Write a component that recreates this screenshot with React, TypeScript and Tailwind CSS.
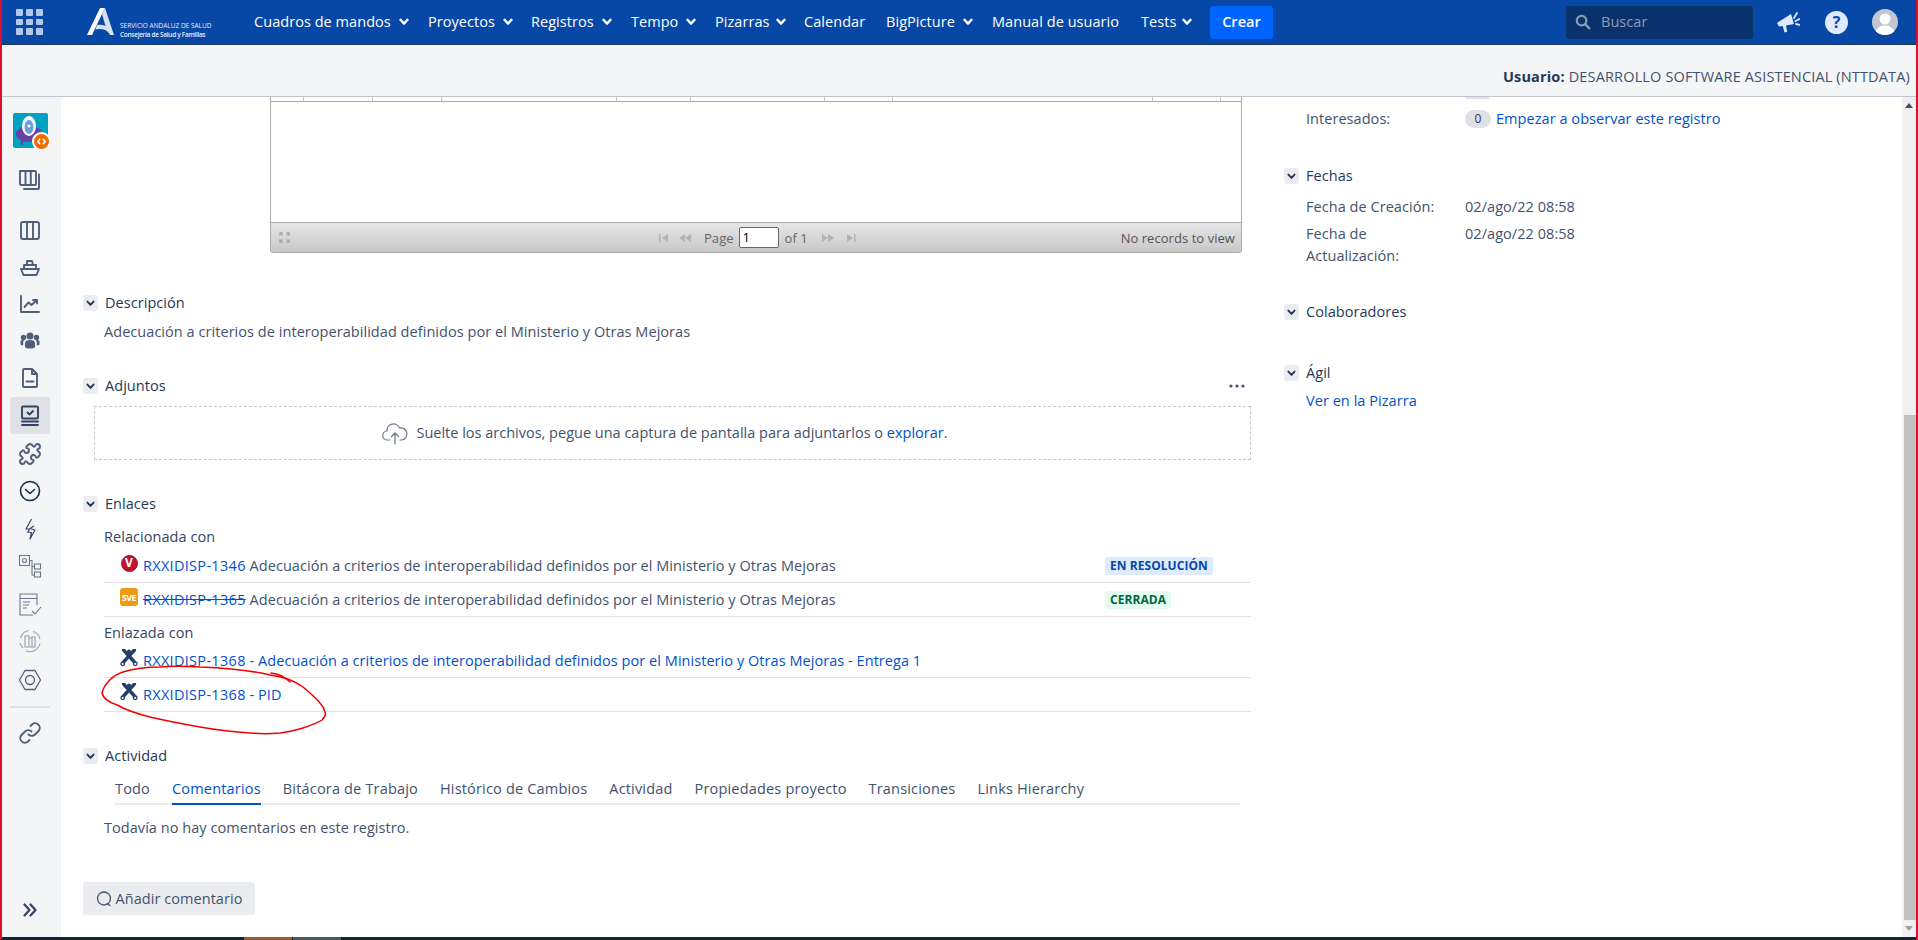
import React from "react";
import { Puzzle } from "lucide-react";

const Chevron = ({ cls = "text-white" }: { cls?: string }) => (
  <svg viewBox="0 0 10 8" className={`w-[10px] h-[8px] shrink-0 ${cls}`} fill="none" stroke="currentColor" strokeWidth="2.4" strokeLinecap="round" strokeLinejoin="round">
    <path d="M1.5 1.8 5 5.6 8.5 1.8" />
  </svg>
);

const NavItem = ({ label, w, caret, ml }: { label: string; w: string; caret?: boolean; ml: string }) => (
  <div className={`flex items-center gap-[9px] text-white shrink-0 ${ml}`}>
    <span className={`whitespace-nowrap shrink-0 ${w}`}>{label}</span>
    {caret && <Chevron />}
  </div>
);

const SectionHead = ({ title, cls = "" }: { title: string; cls?: string }) => (
  <div className={`flex items-center gap-[7px] h-[20px] ${cls}`}>
    <span className="w-[15px] h-[16px] rounded-[3px] bg-[#ebecf0] flex items-center justify-center">
      <svg viewBox="0 0 10 8" className="w-[9px] h-[7px] text-[#253858]" fill="none" stroke="currentColor" strokeWidth="2.2" strokeLinecap="round" strokeLinejoin="round">
        <path d="M1.5 1.8 5 5.6 8.5 1.8" />
      </svg>
    </span>
    <span className="text-[#253858]">{title}</span>
  </div>
);

const S = ({ children, cls = "" }: { children: React.ReactNode; cls?: string }) => (
  <svg viewBox="0 0 24 24" className={`w-[24px] h-[24px] ${cls}`} fill="none" stroke="#505f79" strokeWidth="1.9" strokeLinecap="round" strokeLinejoin="round">
    {children}
  </svg>
);

const ToolIcon = () => (
  <svg viewBox="0 0 18 18" className="w-[18px] h-[18px] shrink-0" fill="none">
    <circle cx="9" cy="2.4" r="2" fill="#253e66" />
    <path d="M3.600 1 14 12.500M14.400 1 4 12.500" stroke="#253e66" strokeWidth="3.400" strokeLinecap="round" />
    <circle cx="2.800" cy="14.800" r="1.800" stroke="#253e66" strokeWidth="1.300" />
    <circle cx="15.200" cy="14.800" r="1.800" stroke="#253e66" strokeWidth="1.300" />
  </svg>
);

const RowLink = ({ children, icon, right }: { children: React.ReactNode; icon: React.ReactNode; right?: React.ReactNode }) => (
  <div className="h-[34px] flex items-center border-b border-[#dfe1e6] pl-[16px] relative">
    <span className="w-[18px] h-[18px] mr-[5px] -mt-[5px] flex items-center justify-center shrink-0">{icon}</span>
    <span className="whitespace-nowrap">{children}</span>
    {right && <span className="ml-auto mr-[41px] w-[105px] flex">{right}</span>}
  </div>
);

const tabs = ["Todo", "Comentarios", "Bitácora de Trabajo", "Histórico de Cambios", "Actividad", "Propiedades proyecto", "Transiciones", "Links Hierarchy"];
const gridCols = ["w-[33px]", "w-[69px]", "w-[69px]", "w-[175px]", "w-[74px]", "w-[134px]", "w-[68px]", "w-[260px]", "w-[68px]"];

export default function App() {
  return (
    <div className="relative w-[1918px] h-[940px] overflow-hidden bg-white flex flex-col text-[14.5px] leading-[20px] text-[#42526e] font-['Open_Sans',sans-serif] tracking-[0.05px]">
      <header className="h-[45px] shrink-0 bg-[#0747a6] border-b border-[#1d3557] flex items-center pl-[16px] pr-[20px]">
        <div className="grid grid-cols-3 gap-[3px] w-[27px] h-[26px] shrink-0">
          {Array.from({ length: 9 }).map((_, i) => (
            <span key={i} className="bg-[#b4c8e6] rounded-[1px]" />
          ))}
        </div>
        <svg viewBox="0 0 28 28" className="w-[28px] h-[28px] ml-[44px] shrink-0">
          <path d="M18 0 27 27h-4C21 23 18 21.500 14 21c-2-.2-4 0-5.500.5L10 17c3-.5 6 0 8.500 1L15 6Z" fill="#d5e0f0" />
          <path d="M13 0h5L15 6 5 27H0Z" fill="#fff" />
        </svg>
        <div className="ml-[5px] w-[90px] text-[#e6edf7] leading-[9px] mt-[15px] shrink-0">
          <div className="text-[6.5px] tracking-[0px] whitespace-nowrap">SERVICIO ANDALUZ DE SALUD</div>
          <div className="text-[6.5px] tracking-[-0.3px] font-semibold whitespace-nowrap">Consejería de Salud y Familias</div>
        </div>
        <NavItem label="Cuadros de mandos" w="w-[136px]" caret ml="ml-[44px]" />
        <NavItem label="Proyectos" w="w-[66px]" caret ml="ml-[19px]" />
        <NavItem label="Registros" w="w-[62px]" caret ml="ml-[18px]" />
        <NavItem label="Tempo" w="w-[46px]" caret ml="ml-[19px]" />
        <NavItem label="Pizarras" w="w-[52px]" caret ml="ml-[19px]" />
        <NavItem label="Calendar" w="w-[60px]" ml="ml-[18px]" />
        <NavItem label="BigPicture" w="w-[68px]" caret ml="ml-[22px]" />
        <NavItem label="Manual de usuario" w="w-[126px]" ml="ml-[19px]" />
        <NavItem label="Tests" w="w-[32px]" caret ml="ml-[23px]" />
        <button className="ml-[18px] w-[63px] h-[33px] rounded-[3px] bg-[#0065ff] text-white font-semibold shrink-0">Crear</button>
        <div className="ml-auto w-[187px] h-[33px] rounded-[3px] bg-[#09326c] flex items-center pl-[9px] text-[#8c9cb4]">
          <svg viewBox="0 0 16 16" className="w-[16px] h-[16px]" fill="none" stroke="#8c9cb4" strokeWidth="2.2" strokeLinecap="round">
            <circle cx="6.6" cy="6.6" r="4.8" />
            <path d="m10.4 10.4 4 4" />
          </svg>
          <span className="ml-[10px]">Buscar</span>
        </div>
        <svg viewBox="0 0 24 24" className="w-[24px] h-[24px] ml-[23px]" fill="#deebff">
          <path d="M1 13 15 4l3 10-8 1.5 1.2 6.3-2.6.7L6.700 16l-3.700.6Z" />
          <path d="m18 8 3-5M19.500 11l4-2M20 14l3.500.8" stroke="#deebff" strokeWidth="1.8" strokeLinecap="round" />
        </svg>
        <span className="ml-[25px] w-[23px] h-[23px] rounded-full bg-[#deebff] flex items-center justify-center text-[#0747a6] font-bold text-[16px]">?</span>
        <span className="ml-[24px] w-[26px] h-[26px] rounded-full bg-[#c1c7d0] overflow-hidden">
          <svg viewBox="0 0 26 26" className="w-[26px] h-[26px]" fill="#fff">
            <circle cx="13" cy="10" r="5.5" />
            <path d="M3 26c.5-7 5-9.500 10-9.500S22.500 19 23 26Z" />
          </svg>
        </span>
      </header>

      <div className="h-[52px] shrink-0 bg-[#f4f5f7] border-b border-[#c1c7d0] flex items-end justify-end pr-[8px] pb-[9px] text-[#42526e] tracking-[0.15px]">
        <span className="font-bold text-[#253858] mr-[4px]">Usuario:</span> DESARROLLO SOFTWARE ASISTENCIAL (NTTDATA)
      </div>

      <div className="flex-1 flex min-h-0">
        <aside className="w-[61px] shrink-0 bg-[#f4f5f7] flex flex-col items-center pr-[1px]">
          <div className="relative w-[35px] h-[35px] mt-[16px] rounded-[2px] bg-[#00a3bf] shrink-0">
            <svg viewBox="0 0 35 35" className="w-[35px] h-[35px]">
              <ellipse cx="16" cy="21" rx="13" ry="8" fill="#6b3fa8" />
              <ellipse cx="16" cy="13" rx="7" ry="10" fill="#fff" />
              <ellipse cx="16" cy="14" rx="4.500" ry="7" fill="#6d9fdc" />
              <circle cx="16" cy="13" r="1.500" fill="#fff" />
              <path d="M9 27v5M23 27v5" stroke="#6b3fa8" strokeWidth="2" />
            </svg>
            <span className="absolute -right-[3px] -bottom-[3px] w-[19px] h-[19px] rounded-full bg-[#ee6c00] border-2 border-white flex items-center justify-center text-white">
              <svg viewBox="0 0 10 10" className="w-[9px] h-[9px]" fill="none" stroke="#fff" strokeWidth="1.8"><path d="M3.500 2 1 5l2.500 3M6.500 2 9 5 6.500 8" /></svg>
            </span>
          </div>
          <S cls="mt-[20px] shrink-0">
            <path d="M2 3h15a1 1 0 0 1 1 1v12a1 1 0 0 1-1 1H3a1 1 0 0 1-1-1ZM7.500 3v14M12.800 3v14M21 6.500V20a1 1 0 0 1-1 1H6" />
          </S>
          <S cls="mt-[26px] shrink-0">
            <rect x="3" y="4" width="18" height="17" rx="2" />
            <path d="M9 4v17M15 4v17" />
          </S>
          <S cls="mt-[13px] shrink-0">
            <path d="M3 14h18l-2.500 6H5.500ZM6 14v-4h12v4M9 10V6h5l1 4" />
          </S>
          <S cls="mt-[13px] shrink-0">
            <path d="M3 4v16h18M6.500 15l4-4.500 3 2.500 5.500-5M15 8h4v3.500" />
          </S>
          <svg viewBox="0 0 24 24" className="w-[24px] h-[24px] mt-[12px] shrink-0" fill="#505f79">
            <circle cx="12" cy="8" r="3.500" />
            <circle cx="5.500" cy="9.500" r="2.700" />
            <circle cx="18.500" cy="9.500" r="2.700" />
            <path d="M7 15c0-2 2-3 5-3s5 1 5 3v4c-1 2-9 2-10 0ZM2.500 13.500c0-1.200 1.500-1.800 3-1.800l.5.300c-.6.800-.8 2-.8 3v2.500c-1.500 0-2.700-.5-2.700-1.200ZM21.500 13.500c0-1.200-1.500-1.800-3-1.800l-.5.300c.6.800.8 2 .8 3v2.500c1.500 0 2.700-.5 2.700-1.200Z" />
          </svg>
          <S cls="mt-[14px] shrink-0">
            <path d="M6 3h8l5 5v12a1 1 0 0 1-1 1H6a1 1 0 0 1-1-1V4a1 1 0 0 1 1-1ZM14 3v5h5M8.500 15.500h7" />
          </S>
          <div className="w-[40px] h-[37px] mt-[7px] rounded-[3px] bg-[#dfe1e6] flex items-center justify-center shrink-0">
            <svg viewBox="0 0 24 24" className="w-[24px] h-[24px]" fill="none" stroke="#344563" strokeWidth="1.9" strokeLinecap="round" strokeLinejoin="round">
              <rect x="4" y="2.500" width="16" height="12" rx="1" />
              <path d="m9.500 8.500 2 2 3.500-3.500M4 17.500h16M4 21h16" />
            </svg>
          </div>
          <Puzzle size={24} strokeWidth={1.9} color="#505f79" className="mt-[8px] shrink-0" />
          <svg viewBox="0 0 24 24" className="w-[24px] h-[24px] mt-[13px] shrink-0" fill="none" stroke="#172b4d" strokeWidth="1.600" strokeLinecap="round" strokeLinejoin="round">
            <circle cx="12" cy="12" r="9.500" />
            <path d="m7.500 10.500 4.500 4 4.500-4" />
          </svg>
          <svg viewBox="0 0 24 24" className="w-[24px] h-[24px] mt-[14px] shrink-0" fill="none" stroke="#344563" strokeWidth="1.200" strokeLinejoin="round">
            <path d="M13.500 2 8 12h3.500L10 15M16 9l-4 2.500L17 13l-5 9 1.500-6.500L9 15" />
          </svg>
          <svg viewBox="0 0 24 24" className="w-[24px] h-[24px] mt-[13px] shrink-0" fill="none" stroke="#6b778c" strokeWidth="1.100">
            <rect x="1.500" y="1.500" width="10" height="10" />
            <circle cx="6.500" cy="6.500" r="2" />
            <rect x="16.500" y="10" width="6" height="5" />
            <rect x="16.500" y="18" width="6" height="5" />
            <path d="M11.500 6.500h2.500V21h2.500M14 12.500h2.500" />
          </svg>
          <svg viewBox="0 0 24 24" className="w-[24px] h-[24px] mt-[14px] shrink-0" fill="none" stroke="#6b778c" strokeWidth="1.100">
            <path d="M19 13V2H2v21h13M2 6.500h17M5 10h7M5 13h6M5 16h4" />
            <path d="m14 19 3 3 6-7" />
          </svg>
          <svg viewBox="0 0 24 24" className="w-[24px] h-[24px] mt-[13px] shrink-0" fill="none" stroke="#97a0af" strokeWidth="1.100">
            <path d="M11 1.500A10.500 10.500 0 0 0 2.500 9M22 14.500A10.500 10.500 0 0 1 8 22M15 2.500A10.500 10.500 0 0 1 22 10M2 14a10.500 10.500 0 0 0 3 5" />
            <path d="M7 7h4v11H7ZM11 9h3v9h-3ZM14 8h3v10h-3Z" />
          </svg>
          <svg viewBox="0 0 24 24" className="w-[24px] h-[24px] mt-[15px] shrink-0" fill="none" stroke="#505f79" strokeWidth="1.300" strokeLinejoin="round">
            <path d="m7 2.500h10L22.500 12 17 21.500H7L1.500 12Z" />
            <circle cx="12" cy="12" r="4.500" />
          </svg>
          <div className="w-[40px] h-[2px] mt-[14px] bg-[#dfe1e6] shrink-0" />
          <S cls="mt-[13px] shrink-0">
            <path d="M10.500 13.500a4.500 4.500 0 0 0 6.500 0l3.500-3.500a4.600 4.600 0 0 0-6.500-6.500l-1.500 1.500M13.500 10.500a4.500 4.500 0 0 0-6.500 0l-3.500 3.500a4.600 4.600 0 0 0 6.500 6.500l1.500-1.500" />
          </S>
          <svg viewBox="0 0 16 16" className="w-[16px] h-[16px] mt-auto mb-[19px] shrink-0" fill="none" stroke="#344563" strokeWidth="2.300" strokeLinecap="round" strokeLinejoin="round">
            <path d="m2.500 2.500 5 5.500-5 5.500M8.500 2.500l5 5.500-5 5.500" />
          </svg>
        </aside>

        <main className="flex-1 flex min-w-0">
          <section className="w-[1201px] shrink-0 pl-[22px] pr-[11px]">
            <div className="ml-[187px] w-[972px] h-[156px] border-x border-b border-[#aaaaaa] rounded-b-[3px] flex flex-col">
              <div className="h-[5px] flex border-b border-[#aaaaaa] shrink-0">
                {gridCols.map((c, i) => (
                  <span key={i} className={`${c} border-r border-[#c5c5c5]`} />
                ))}
              </div>
              <div className="flex-1 border-b border-[#aaaaaa]" />
              <div className="h-[29px] bg-gradient-to-b from-[#e6e6e6] to-[#c8c8c8] flex items-center text-[13px] text-[#666666] relative shrink-0">
                <svg viewBox="0 0 12 12" className="w-[11px] h-[11px] ml-[8px]" fill="none" stroke="#a3a3a3" strokeWidth="1.200">
                  <path d="M1 4V1h3M8 1h3v3M11 8v3H8M4 11H1V8M1 1l3 3M11 1 8 4M11 11 8 8M1 11l3-3" />
                </svg>
                <svg viewBox="0 0 32 8" className="w-[32px] h-[8px] ml-[369px]" fill="#b4b4b4">
                  <path d="M0 0h1.500v8H0ZM9 0v8L3 4ZM26 0v8l-6-4ZM32 0v8l-6-4Z" />
                </svg>
                <span className="ml-[13px]">Page</span>
                <span className="ml-[5px] w-[40px] h-[21px] border border-[#666666] bg-white rounded-[2px] text-black pl-[3px] leading-[19px]">1</span>
                <span className="ml-[6px]">of 1</span>
                <svg viewBox="0 0 34 8" className="w-[34px] h-[8px] ml-[14px]" fill="#b4b4b4">
                  <path d="M0 0v8l6-4ZM6 0v8l6-4ZM25 0v8l6-4ZM32 0h1.500v8H32Z" />
                </svg>
                <span className="ml-auto mr-[6px] text-[#555555]">No records to view</span>
              </div>
            </div>

            <SectionHead title="Descripción" cls="mt-[40px]" />
            <p className="ml-[21px] mt-[9px]">Adecuación a criterios de interoperabilidad definidos por el Ministerio y Otras Mejoras</p>

            <div className="flex items-center justify-between mt-[34px]">
              <SectionHead title="Adjuntos" />
              <svg viewBox="0 0 16 4" className="w-[16px] h-[4px] mr-[6px]" fill="#42526e">
                <circle cx="2" cy="2" r="1.600" />
                <circle cx="8" cy="2" r="1.600" />
                <circle cx="14" cy="2" r="1.600" />
              </svg>
            </div>
            <div className="ml-[11px] mt-[10px] h-[54px] border border-dashed border-[#c1c7d0] flex items-center justify-center pr-[15px] tracking-[0px]">
              <svg viewBox="0 0 26 24" className="w-[26px] h-[24px] mr-[8px]" fill="none" stroke="#6b778c" strokeWidth="1.200" strokeLinecap="round" strokeLinejoin="round">
                <path d="M8 19H5.500a4.500 4.500 0 0 1-.5-9 6.500 6.500 0 0 1 12.500-3 6 6 0 0 1 2.500 12h-2M13 23V12M9.500 15.500 13 12l3.500 3.500" />
              </svg>
              <span>Suelte los archivos, pegue una captura de pantalla para adjuntarlos o <span className="text-[#0052cc]">explorar.</span></span>
            </div>

            <SectionHead title="Enlaces" cls="mt-[34px]" />
            <div className="ml-[21px] text-[#42526e]">
              <div className="mt-[13px] text-[#344563]">Relacionada con</div>
              <div className="mt-[2px]">
                <RowLink
                  icon={
                    <span className="w-[17px] h-[17px] rounded-full bg-[#c8102e] border border-[#8e1b22] flex items-center justify-center text-white text-[12px] font-bold leading-none">V</span>
                  }
                  right={<span className="h-[18px] px-[5px] rounded-[3px] bg-[#deebff] text-[#0747a6] font-bold text-[12px] leading-[18px] whitespace-nowrap">EN RESOLUCIÓN</span>}
                >
                  <span className="text-[#0052cc] tracking-[0.3px]">RXXIDISP-1346</span> Adecuación a criterios de interoperabilidad definidos por el Ministerio y Otras Mejoras
                </RowLink>
                <RowLink
                  icon={
                    <span className="w-[18px] h-[18px] rounded-[3px] bg-[#f09a14] flex items-center justify-center text-white text-[9px] font-bold leading-none tracking-[-0.5px]">SVE</span>
                  }
                  right={<span className="h-[18px] px-[5px] rounded-[3px] bg-[#e3fcef] text-[#006644] font-bold text-[12px] leading-[18px] whitespace-nowrap">CERRADA</span>}
                >
                  <span className="text-[#0052cc] line-through tracking-[0.3px]">RXXIDISP-1365</span> Adecuación a criterios de interoperabilidad definidos por el Ministerio y Otras Mejoras
                </RowLink>
              </div>
              <div className="mt-[6px] text-[#344563]">Enlazada con</div>
              <div className="mt-px">
                <RowLink icon={<ToolIcon />}>
                  <span className="text-[#0052cc]"><span className="tracking-[0.3px]">RXXIDISP-1368</span> - Adecuación a criterios de interoperabilidad definidos por el Ministerio y Otras Mejoras - Entrega 1</span>
                </RowLink>
                <RowLink icon={<ToolIcon />}>
                  <span className="text-[#0052cc]"><span className="tracking-[0.3px]">RXXIDISP-1368</span> - PID</span>
                </RowLink>
              </div>
            </div>

            <SectionHead title="Actividad" cls="mt-[34px]" />
            <div className="ml-[32px] mr-[11px] mt-[13px] flex gap-[22px] border-b-2 border-[#ebecf0] h-[26px] tracking-[0.18px]">
              {tabs.map((t, i) => (
                <span
                  key={t}
                  className={
                    i === 1
                      ? "h-[26px] whitespace-nowrap text-[#0052cc] font-medium border-b-2 border-[#0052cc]"
                      : "h-[26px] whitespace-nowrap text-[#42526e]"
                  }
                >
                  {t}
                </span>
              ))}
            </div>
            <p className="ml-[21px] mt-[13px]">Todavía no hay comentarios en este registro.</p>
            <button className="mt-[44px] h-[33px] w-[172px] rounded-[3px] bg-[#ebecf0] flex items-center justify-center gap-[4px]">
              <svg viewBox="0 0 16 16" className="w-[16px] h-[16px]" fill="none" stroke="#42526e" strokeWidth="1.300" strokeLinecap="round">
                <circle cx="8" cy="7.500" r="6.500" />
                <path d="m11 12.500 3 2" />
              </svg>
              Añadir comentario
            </button>
          </section>

          <section className="w-[640px] shrink-0 pl-[22px] relative">
            <div className="flex items-center h-[2px] pl-[181px]">
              <span className="w-[25px] h-[2px] bg-[#dfe1e6] rounded-b-full" />
            </div>
            <div className="flex mt-[10px] pl-[22px]">
              <span className="w-[159px]">Interesados:</span>
              <span className="w-[26px] h-[18px] mt-px rounded-full bg-[#dfe1e6] text-[#253858] text-[12px] leading-[18px] text-center">0</span>
              <span className="ml-[5px] text-[#0052cc]">Empezar a observar este registro</span>
            </div>
            <SectionHead title="Fechas" cls="mt-[37px]" />
            <div className="flex pl-[22px] mt-[11px]">
              <span className="w-[159px]">Fecha de Creación:</span>
              <span>02/ago/22 08:58</span>
            </div>
            <div className="flex pl-[22px] mt-[6px] leading-[22px]">
              <span className="w-[159px]">Fecha de<br />Actualización:</span>
              <span>02/ago/22 08:58</span>
            </div>
            <SectionHead title="Colaboradores" cls="mt-[35px]" />
            <SectionHead title="Ágil" cls="mt-[41px]" />
            <div className="pl-[22px] mt-[8px] text-[#0052cc]">Ver en la Pizarra</div>
          </section>
        </main>

        <div className="w-[14px] mr-[2px] shrink-0 ml-auto bg-[#f0f0f0] flex flex-col">
          <div className="h-[318px] shrink-0 flex justify-center pt-[6px]">
            <span className="w-0 h-0 border-x-[4px] border-x-transparent border-b-[5px] border-b-[#505050]" />
          </div>
          <div className="flex-1 ml-[2px] bg-[#c1c1c1]" />
          <div className="h-[17px] shrink-0 flex justify-center pt-[6px]">
            <span className="w-0 h-0 border-x-[4px] border-x-transparent border-t-[5px] border-t-[#a0a0a0]" />
          </div>
        </div>
      </div>

      <div className="h-[3px] shrink-0 bg-[#17232e] flex">
        <span className="ml-[244px] w-[48px] bg-[#9a5a2c]" />
        <span className="ml-px w-[48px] bg-[#4a5763]" />
      </div>

      {/* window frame */}
      <div className="absolute left-0 top-0 bottom-0 w-[2px] bg-[#d9112f]" />
      <div className="absolute right-0 top-0 bottom-0 w-[2px] bg-[#d9112f]" />

      {/* hand-drawn annotation */}
      <svg className="absolute left-0 top-0 w-[1918px] h-[940px] pointer-events-none" viewBox="0 0 1918 940" fill="none" stroke="#f00000" strokeWidth="1.500" strokeLinecap="round">
        <path d="M270 675C250 670 225 668 200 667C185 666 170 666 160 667C145 667 133 669 123 672C113 675 104 684 102 693C103 698 108 702 117 705C128 711 138 714 150 717C167 721 183 724 200 727C217 730 233 732 250 733C260 734 270 734 280 733C288 732 296 730 303 728C312 725 319 722 322 720C325 717 326 714 325 712C324 708 322 705 320 703C315 697 309 692 303 687C295 681 285 677 270 675" />
        <path d="M271 673Q282 674 290 682" />
      </svg>
    </div>
  );
}
